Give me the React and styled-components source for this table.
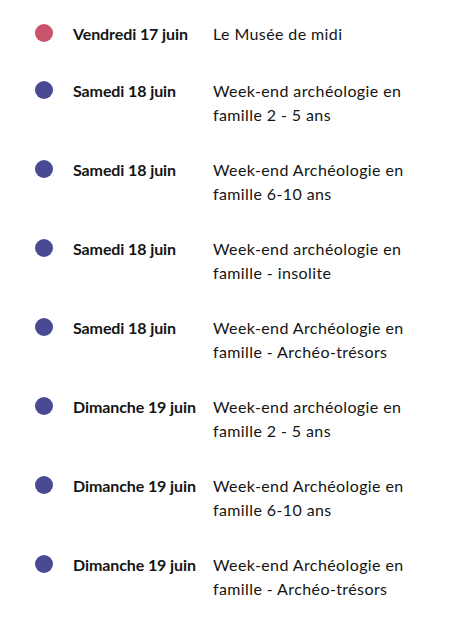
import React from "react";
import styled, { createGlobalStyle } from "styled-components";

const GlobalStyle = createGlobalStyle`
  body {
    margin: 0;
    background: #ffffff;
    font-family: "Lato", "Open Sans", sans-serif;
    color: #141414;
  }
`;

const List = styled.ul`
  list-style: none;
  margin: 0;
  padding: 22px 0 0 35px;
  display: flex;
  flex-direction: column;
  gap: 31px;
`;

const Row = styled.li`
  display: grid;
  grid-template-columns: 38px 140px 210px;
  align-items: start;
  min-height: 26px;
  font-size: 16px;
  line-height: 24px;
`;

const Dot = styled.span`
  display: block;
  width: 18px;
  height: 18px;
  margin-top: 2px;
  border-radius: 50%;
  background: ${(p) => (p.$accent ? "#c9536a" : "#4a4a94")};
`;

const Date = styled.span`
  font-weight: 700;
  letter-spacing: -0.1px;
`;

const Title = styled.span`
  font-weight: 400;
  letter-spacing: 0.4px;
`;

const events = [
  { date: "Vendredi 17 juin", title: "Le Musée de midi", accent: true },
  { date: "Samedi 18 juin", title: "Week-end archéologie en famille 2 - 5 ans" },
  { date: "Samedi 18 juin", title: "Week-end Archéologie en famille 6-10 ans" },
  { date: "Samedi 18 juin", title: "Week-end archéologie en famille - insolite" },
  { date: "Samedi 18 juin", title: "Week-end Archéologie en famille - Archéo-trésors" },
  { date: "Dimanche 19 juin", title: "Week-end archéologie en famille 2 - 5 ans" },
  { date: "Dimanche 19 juin", title: "Week-end Archéologie en famille 6-10 ans" },
  { date: "Dimanche 19 juin", title: "Week-end Archéologie en famille - Archéo-trésors" },
];

export default function App() {
  return (
    <>
      <GlobalStyle />
      <List>
        {events.map((e, i) => (
          <Row key={i}>
            <Dot $accent={e.accent} />
            <Date>{e.date}</Date>
            <Title>{e.title}</Title>
          </Row>
        ))}
      </List>
    </>
  );
}
